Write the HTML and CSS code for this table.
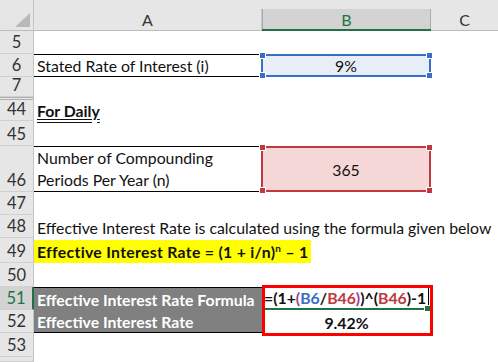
FILE: index.html
```html
<!DOCTYPE html>
<html>
<head>
<meta charset="utf-8">
<link rel="stylesheet" href="styles.css">
</head>
<body>
<div class="sheet">
  <!-- header -->
  <div class="corner"><svg width="34" height="31" viewBox="0 0 34 31"><polygon points="15,27 30,27 30,13" fill="#b8b8b8"/></svg></div>
  <div class="colhead"><span>A</span></div>
  <div class="colhead sel"><span>B</span></div>
  <div class="colhead last"><span>C</span></div>

  <!-- 5 -->
  <div class="rh">5</div><div class="cell"></div><div class="cell"></div><div class="cell"></div>
  <!-- 6 -->
  <div class="rh">6</div>
  <div class="cell a bt bb">Stated Rate of Interest (i)</div>
  <div class="cell center blue">9%<i class="h tl bl-c"></i><i class="h tr bl-c"></i><i class="h btl bl-c"></i><i class="h btr bl-c"></i></div>
  <div class="cell"></div>
  <!-- 7 -->
  <div class="rh">7</div><div class="cell"></div><div class="cell"></div><div class="cell"></div>
  <!-- hidden separator -->
  <div class="rh sep"></div><div class="cell"></div><div class="cell"></div><div class="cell"></div>
  <!-- 44 -->
  <div class="rh">44</div>
  <div class="cell a"><b class="dbl">For Daily</b></div>
  <div class="cell"></div><div class="cell"></div>
  <!-- 45 -->
  <div class="rh">45</div><div class="cell"></div><div class="cell"></div><div class="cell"></div>
  <!-- 46 -->
  <div class="rh">46</div>
  <div class="cell a bt bb wrap">Number of Compounding<br>Periods Per Year (n)</div>
  <div class="cell center red">365<i class="h tl rd-c"></i><i class="h tr rd-c"></i><i class="h btl rd-c"></i><i class="h btr rd-c"></i></div>
  <div class="cell"></div>
  <!-- 47 -->
  <div class="rh">47</div><div class="cell"></div><div class="cell"></div><div class="cell"></div>
  <!-- 48 -->
  <div class="rh">48</div>
  <div class="cell a">Effective Interest Rate is calculated using the formula given below</div>
  <div class="cell"></div><div class="cell"></div>
  <!-- 49 -->
  <div class="rh">49</div>
  <div class="cell a"><b class="yellow">Effective Interest Rate = (1 + i/n)<sup>n</sup> – 1</b></div>
  <div class="cell"></div><div class="cell"></div>
  <!-- 50 -->
  <div class="rh">50</div><div class="cell"></div><div class="cell"></div><div class="cell"></div>
  <!-- 51 -->
  <div class="rh rsel">51</div>
  <div class="cell a gray bt">Effective Interest Rate Formula</div>
  <div class="cell formula">=(1+<span class="pu">(</span><span class="bu">B6</span>/<span class="re">B46</span><span class="pu">)</span>)^(<span class="re">B46</span>)-1<i class="caret"></i><i class="fill"></i></div>
  <div class="cell"></div>
  <!-- 52 -->
  <div class="rh">52</div>
  <div class="cell a gray bb">Effective Interest Rate</div>
  <div class="cell center bold result">9.42%</div>
  <div class="cell"></div>
  <!-- 53 -->
  <div class="rh">53</div><div class="cell"></div><div class="cell"></div><div class="cell"></div>
  <!-- 54 -->
  <div class="rh last"></div><div class="cell"></div><div class="cell"></div><div class="cell"></div>

  <div class="redbox"></div>
</div>
</body>
</html>
```
FILE: styles.css
```css
html, body {
  margin: 0;
  padding: 0;
  background: #fff;
  overflow: hidden;
}
.sheet {
  width: 498px;
  height: 362px;
  display: grid;
  grid-template-columns: 34px 228px 169px 67px;
  grid-template-rows: 31px 23px 23px 20px 3px 21px 25px 46px 23px 23px 25px 24px 23px 23px 24px 1fr;
  font-family: Lato, "Open Sans", sans-serif;
  font-size: 15.8px;
  color: #111;
  overflow: hidden;
}
.corner {
  background: #e6e6e6;
  border-right: 1px solid #c4c4c4;
  border-bottom: 1px solid #bcbcbc;
  box-sizing: border-box;
}
.corner svg { display: block; }
.colhead {
  background: #e6e6e6;
  border-bottom: 1px solid #bcbcbc;
  box-sizing: border-box;
  padding-top: 9px;
  display: flex;
}
.colhead span {
  flex: 1;
  display: flex;
  align-items: center;
  justify-content: center;
  border-right: 1px solid #c8c8c8;
  color: #333;
  font-size: 16px;
}
.colhead.last span { border-right: none; }
.colhead.sel { border-bottom: 2px solid #217346; }
.colhead.sel span {
  background: #d3d3d3;
  color: #217346;
  border-left: 1px solid #ababab;
  border-right: 1px solid #ababab;
}
.rh {
  background: #e6e6e6;
  border-right: 1px solid #c4c4c4;
  border-bottom: 1px solid #d0d0d0;
  box-sizing: border-box;
  display: flex;
  align-items: flex-end;
  justify-content: center;
  padding-bottom: 1px;
  color: #333;
  font-size: 16.5px;
  line-height: 20px;
}
.rh.sep {
  border-bottom: none;
  border-top: 1px solid #b0b0b0;
  background: linear-gradient(#e6e6e6 0 1px, #b0b0b0 1px 2px, #e6e6e6 2px);
}
.rh.rsel {
  background: #d3d3d3;
  color: #217346;
  border-right: 2px solid #217346;
}
.cell {
  position: relative;
  box-sizing: border-box;
  display: flex;
  align-items: flex-end;
  white-space: nowrap;
  line-height: 21px;
}
.cell.a { padding-left: 3px; }
.bt { border-top: 1px solid #000; }
.bb { border-bottom: 1px solid #000; }
.wrap { flex-direction: column; align-items: flex-start; justify-content: flex-end; line-height: 22px; }
.center { justify-content: center; align-items: center; }
.bold { font-weight: 700; align-items: flex-end; }
.dbl {
  text-decoration: underline double;
  text-underline-offset: 2px;
}
.yellow {
  background: #ffff00;
  padding-right: 3px;
  margin-left: -3px;
  padding-left: 3px;
  line-height: 23px;
  letter-spacing: 0.3px;
}
.yellow sup { font-size: 10px; line-height: 0; }
.blue {
  background: #e8eef8;
  border: 2px solid #3a6dc5;
  margin: 0 0 0 -1px;
}
.red {
  background: #f5d7d7;
  border: 2px solid #c0393f;
  margin: 0 0 0 -1px;
}
.h {
  position: absolute;
  width: 5px;
  height: 5px;
  border: 1px solid #fff;
}
.bl-c { background: #3a6dc5; }
.rd-c { background: #c0393f; }
.tl { left: -4px; top: -4px; }
.tr { right: -4px; top: -4px; }
.btl { left: -4px; bottom: -4px; }
.btr { right: -4px; bottom: -4px; }
.gray {
  background: #808080;
  color: #fff;
  font-weight: 700;
  overflow: hidden;
}
.formula {
  grid-column: 3;
  grid-row: 13;
  font-weight: 700;
  padding-left: 2px;
  border-bottom: 2px solid #217346;
}
.result {
  grid-column: 3;
  grid-row: 14;
}
.pu { color: #a03c96; }
.bu { color: #3a6dc5; }
.re { color: #c0393f; }
.caret {
  display: inline-block;
  width: 1px;
  height: 20px;
  background: #000;
  margin-left: 2px;
  align-self: center;
}
.fill {
  position: absolute;
  right: 0;
  bottom: -4px;
  width: 5px;
  height: 5px;
  background: #217346;
  border: 1px solid #fff;
}
.redbox {
  grid-column: 3;
  grid-row: 13 / 15;
  margin: -2px -2px -3px 0;
  border: 3px solid #ff0000;
  pointer-events: none;
  z-index: 2;
}
```
